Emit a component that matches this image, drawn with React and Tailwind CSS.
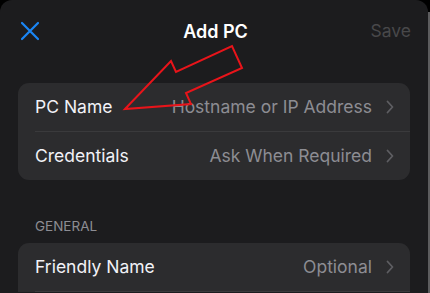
import React from 'react';

const Chevron = () => (
    <svg width="8" height="14" viewBox="0 0 8 14" fill="none" className="ml-[14px] shrink-0">
        <path d="M1.5 1.5L6.5 7L1.5 12.5" stroke="#5e5e62" strokeWidth="1.8" strokeLinecap="round" strokeLinejoin="round"/>
    </svg>
);

const Row = ({label, value, divider}) => (
    <div className="flex items-center h-[48.5px] shrink-0 pl-[17px]">
        <div className={`flex items-center flex-1 h-full pr-[16px] ${divider ? 'border-b border-[#3a3a3c]' : ''}`}>
            <span className="text-[17.5px] text-[#f2f2f7] whitespace-nowrap">{label}</span>
            <span className="ml-auto text-[17.5px] text-[#8d8d93] whitespace-nowrap">{value}</span>
            <Chevron/>
        </div>
    </div>
);

export default function App() {
    return (
        <div className="w-[430px] h-[293px] bg-black flex overflow-hidden" style={{fontFamily: 'Inter, "Noto Sans", sans-serif'}}>
            <div className="relative flex-1 bg-[#1c1c1e] rounded-t-[12px] flex flex-col overflow-hidden">
                <div className="grid grid-cols-[1fr_auto_1fr] items-center h-[62px] shrink-0 pl-[20px] pr-[17px]">
                    <svg width="20" height="20" viewBox="0 0 20 20" fill="none">
                        <path d="M2 2L18 18M18 2L2 18" stroke="#1a86f5" strokeWidth="2.2" strokeLinecap="round"/>
                    </svg>
                    <span className="text-[18px] font-semibold text-white">Add PC</span>
                    <span className="justify-self-end text-[17.5px] text-[#48484a]">Save</span>
                </div>
                <div className="mt-[21px] mx-[18px] shrink-0 rounded-[11px] bg-[#2c2c2e] overflow-hidden">
                    <Row label="PC Name" value="Hostname or IP Address" divider/>
                    <Row label="Credentials" value="Ask When Required"/>
                </div>
                <div className="mt-[38px] shrink-0 pl-[35px] text-[13.5px] text-[#8d8d93] leading-[16px]">GENERAL</div>
                <div className="mt-[9px] mx-[18px] shrink-0 rounded-t-[11px] bg-[#2c2c2e] overflow-hidden">
                    <Row label="Friendly Name" value="Optional" divider/>
                </div>
                <svg className="absolute left-0 top-0 pointer-events-none" width="428" height="293">
                    <polygon points="125,109 171,61 176,72 232,46 242,68 186,93 191,104" fill="none" stroke="#e8141a" strokeWidth="2" strokeLinejoin="miter"/>
                </svg>
            </div>
            <div className="w-[2px] mt-[12px] bg-[#5c5c5e]"></div>
        </div>
    );
}
